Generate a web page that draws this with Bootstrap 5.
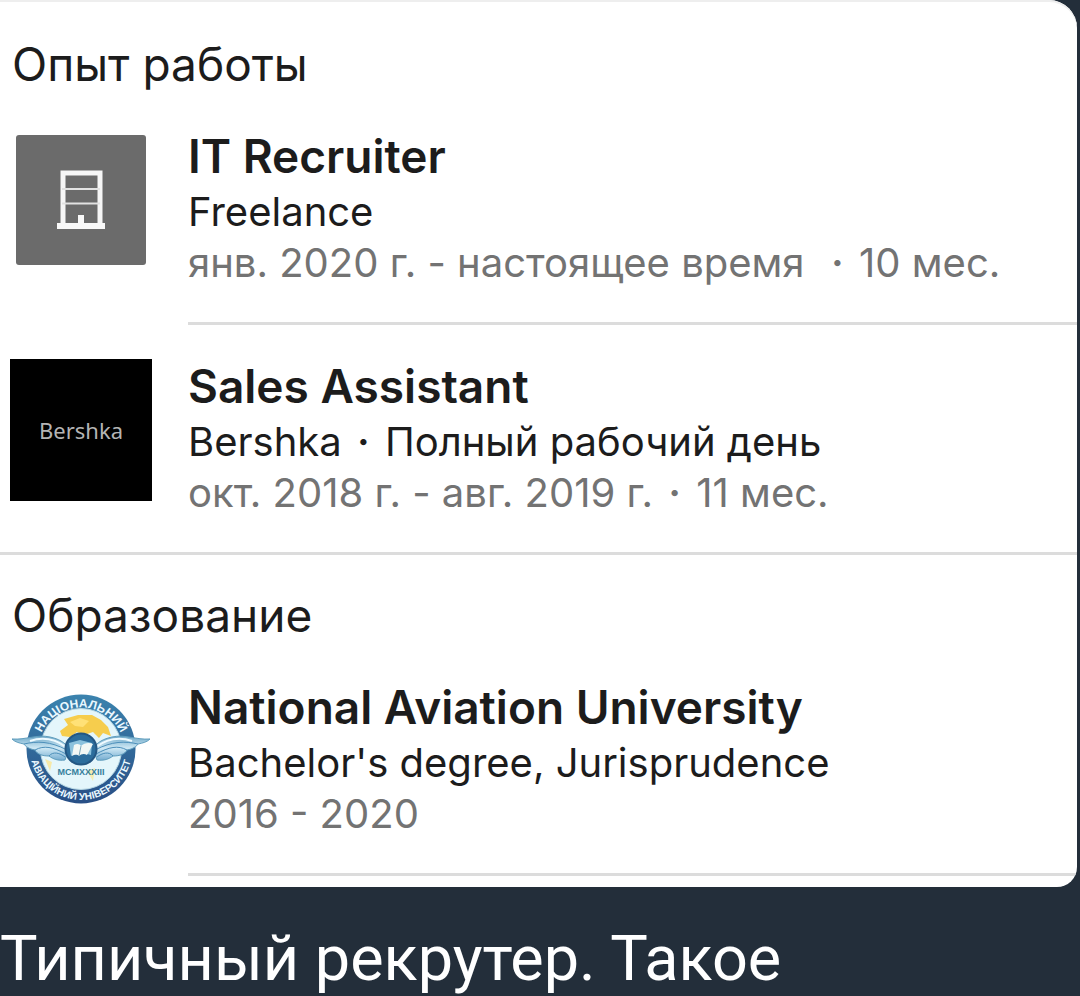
<!DOCTYPE html>
<html lang="ru">
<head>
<meta charset="utf-8">
<meta name="viewport" content="width=device-width, initial-scale=1">
<title>Опыт работы</title>
<link href="https://cdn.jsdelivr.net/npm/bootstrap@5.3.0/dist/css/bootstrap.min.css" rel="stylesheet">
<style>
body { background: #232e3a; font-family: Inter, sans-serif; color: #1c1c1c; }
.profile { background: #fff; border-radius: 0 28px 20px 0; margin-right: 3px; padding-bottom: 11px; box-shadow: inset 0 2px #eeeeee; }
.profile-heading { font-size: 46px; line-height: 56px; font-weight: 400; padding: 36px 12px 0; }
.section-line { border-top: 3px solid #dcdcdc; }
.section-line .profile-heading { padding-top: 32px; }
.logo-col { width: 188px; padding-left: 10px; }
.entry-body { padding: 36px 0; border-bottom: 3px solid #dcdcdc; }
.entry + .entry .entry-body { padding-top: 33px; }
.entry-open .entry-body { border-bottom: 0; }
.entry-title { font-size: 46px; line-height: 56px; font-weight: 600; }
.entry-sub { font-size: 40px; line-height: 56px; }
.entry-date { font-size: 40px; line-height: 46px; color: #737373; }
.dot { font-weight: 600; margin: 0 4px; }
.tile { width: 142px; height: 142px; }
.tile-office { width: 130px; height: 130px; margin: 43px 6px 0; border-radius: 3px; background: #6b6b6b; }
.tile-brand { margin-top: 34px; background: #000; color: #b4b4b4; font: 22px "Noto Sans", sans-serif; }
.tile-seal { margin-top: 36px; display: block; }
.caption-text { font: 63px/72px Roboto, sans-serif; color: #fff; padding-top: 36px; }
</style>
</head>
<body>
<main class="profile overflow-hidden">
  <section>
    <h2 class="profile-heading mb-0">Опыт работы</h2>
    <article class="entry d-flex">
      <div class="logo-col flex-shrink-0">
        <div class="tile-office">
          <svg width="130" height="130" viewBox="0 0 130 130" role="img" aria-label="Компания">
            <g fill="none" stroke="#f6f6f6">
              <path d="M47 90V38H84V90" stroke-width="5"/>
              <path d="M46 54H84M46 68.500H84" stroke-width="2" stroke="#e2e2e2"/>
            </g>
            <path d="M41 88H62V80H68V88H89V94H41Z" fill="#f8f8f8"/>
          </svg>
        </div>
      </div>
      <div class="entry-body flex-grow-1">
        <h3 class="entry-title mb-0">IT Recruiter</h3>
        <div class="entry-sub">Freelance</div>
        <div class="entry-date">янв. 2020 г. - настоящее время &nbsp;<span class="dot">·</span> 10 мес.</div>
      </div>
    </article>
    <article class="entry entry-open d-flex">
      <div class="logo-col flex-shrink-0">
        <div class="tile tile-brand d-flex align-items-center justify-content-center">Bershka</div>
      </div>
      <div class="entry-body flex-grow-1">
        <h3 class="entry-title mb-0">Sales Assistant</h3>
        <div class="entry-sub">Bershka <span class="dot">·</span> Полный рабочий день</div>
        <div class="entry-date">окт. 2018 г. - авг. 2019 г. <span class="dot">·</span> 11 мес.</div>
      </div>
    </article>
  </section>
  <section class="section-line">
    <h2 class="profile-heading mb-0">Образование</h2>
    <article class="entry d-flex">
      <div class="logo-col flex-shrink-0">
        <svg class="tile tile-seal" viewBox="0 0 142 142" role="img" aria-label="National Aviation University">
          <defs>
            <linearGradient id="ring" x1="0" y1="0" x2="0" y2="1"><stop offset="0" stop-color="#3b83ae"/><stop offset="1" stop-color="#284f86"/></linearGradient>
            <linearGradient id="feather" x1="0" y1="0" x2="0" y2="1"><stop offset="0" stop-color="#6fa9c9"/><stop offset=".5" stop-color="#cfe9f5"/><stop offset="1" stop-color="#75acd0"/></linearGradient>
            <path id="arcTop" d="M27.500 72A43.500 43.500 0 0 1 114.500 72"/>
            <path id="arcBottom" d="M20 70A51 51 0 0 0 122 70"/>
            <g id="wing">
              <path d="M2 60C16 61 27 55 40 58C49 60 54 63 59 69L55 81C48 82 43 80 39 77C32 77 27 75 25 71C19 70 15 67 14 65C9 64 5 63 2 60Z" fill="url(#feather)" stroke="#5f9dbd"/>
              <path d="M14 65C27 62 40 62 57 71M25 71C34 66 43 68 56 75M39 77C43 72 50 74 55 78" fill="none" stroke="#4c8fba"/>
              <path d="M20 62C32 58 45 60 56 68" fill="none" stroke="#eefaff" stroke-width="2"/>
            </g>
          </defs>
          <circle cx="71" cy="70" r="54.500" fill="url(#ring)"/>
          <circle cx="71" cy="70" r="40.500" fill="#e4f6fb" stroke="#b5d6e3"/>
          <path d="M50 52L58 46L54 40L68 36L82 36L91 41L98 48L101 57L93 54L89 59L83 53L74 56L67 53L60 58L52 57Z" fill="#f6cd4d"/>
          <path d="M60 43L70 39L79 42L73 48L65 47Z" fill="#ffe177"/>
          <path d="M35 80L42 83L40 92Z" fill="#f7e9a8"/>
          <path d="M77 92L85 89L83 102Z" fill="#f4edb0"/>
          <g font-family="Liberation Sans, sans-serif" font-weight="700" text-anchor="middle">
            <text font-size="12" fill="#eaf8ff"><textPath href="#arcTop" startOffset="50%">НАЦІОНАЛЬНИЙ</textPath></text>
            <text font-size="10" fill="#eaf8ff"><textPath href="#arcBottom" startOffset="50%">АВІАЦІЙНИЙ УНІВЕРСИТЕТ</textPath></text>
            <text x="71" y="96" font-size="9" fill="#357e9b">MCMXXXIII</text>
          </g>
          <use href="#wing"/>
          <use href="#wing" transform="translate(142 0) scale(-1 1)"/>
          <circle cx="71" cy="70" r="15.500" fill="#2c6d9c" stroke="#245783" stroke-width="2"/>
          <path d="M59 64L70 61L82 64L81 76L70 73L61 77Z" fill="#8bc2dd"/>
          <path d="M64 66C67 64 70 65 71 67C74 64 79 63 83 65L77 76C74 74 71 75 69 77C67 75 64 76 62 77Z" fill="#f2f8f5"/>
          <path d="M71 67L69 77" stroke="#7eaabd"/>
        </svg>
      </div>
      <div class="entry-body flex-grow-1">
        <h3 class="entry-title mb-0">National Aviation University</h3>
        <div class="entry-sub">Bachelor's degree, Jurisprudence</div>
        <div class="entry-date">2016 - 2020</div>
      </div>
    </article>
  </section>
</main>
<p class="caption-text mb-0">Типичный рекрутер. Такое</p>
<script src="https://cdn.jsdelivr.net/npm/bootstrap@5.3.0/dist/js/bootstrap.bundle.min.js"></script>
</body>
</html>
